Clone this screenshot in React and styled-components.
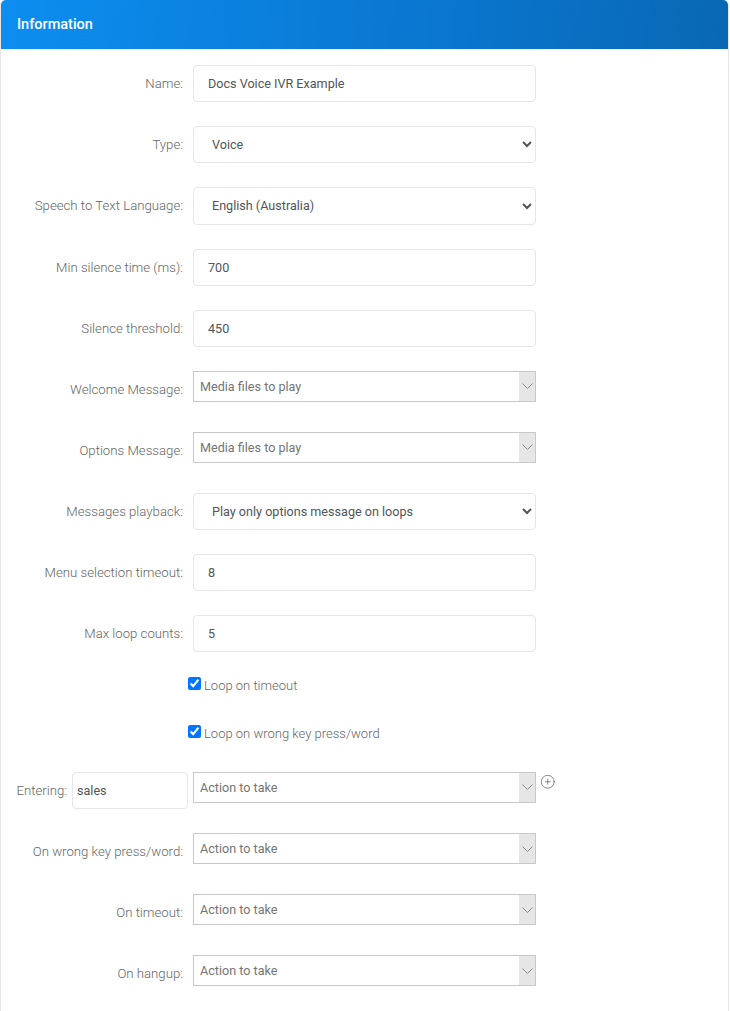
import styled, { createGlobalStyle } from "styled-components";
import { CirclePlus } from "lucide-react";

const GlobalStyle = createGlobalStyle`
  html, body {
    margin: 0;
    padding: 0;
    background: #fff;
    overflow: hidden;
  }
  body {
    font-family: Roboto, "Liberation Sans", sans-serif;
    font-size: 13px;
    color: #495057;
  }
`;

const Card = styled.div`
  width: 729px;
  height: 1011px;
  box-sizing: border-box;
  border: 1px solid #e6e6e6;
  border-top: none;
  border-bottom: none;
  border-radius: 5px 5px 0 0;
  background: #fff;
`;

const Header = styled.div`
  height: 49px;
  box-sizing: border-box;
  padding: 0 16px 1px;
  display: flex;
  align-items: center;
  background: linear-gradient(95deg, #0c8ef0 0%, #0a78d2 55%, #0968b4 100%);
  border-radius: 5px 5px 0 0;
  color: #fff;
  font-size: 14.5px;
  font-weight: 500;
`;

const Form = styled.div`
  display: flex;
  flex-direction: column;
  padding-top: 16.25px;
`;

const Row = styled.div`
  display: flex;
  align-items: flex-start;
  height: 37.1px;
  margin-bottom: 24px;
`;

const Label = styled.label`
  width: 182px;
  height: 37.1px;
  margin-right: 10px;
  display: flex;
  align-items: center;
  justify-content: flex-end;
  color: #666;
  font-size: 13.2px;
  font-weight: 300;
  white-space: nowrap;
`;

const TextInput = styled.input`
  width: ${(p) => p.$width || 343}px;
  height: 37.1px;
  box-sizing: border-box;
  padding: 0 ${(p) => p.$pad || 14}px;
  border: 1px solid #e4e6e8;
  border-radius: 4px;
  background: #fff;
  color: #50565c;
  font: 12.6px Roboto, sans-serif;
  outline: none;
`;

const NativeSelect = styled.select`
  width: 343px;
  height: 37.1px;
  box-sizing: border-box;
  padding: 0 10px 0 14px;
  border: 1px solid #e4e6e8;
  border-radius: 4px;
  background: #fff;
  color: #50565c;
  font: 12.6px Roboto, sans-serif;
  outline: none;
`;

const Multi = styled.div`
  width: 343px;
  height: 31px;
  box-sizing: border-box;
  display: flex;
  align-items: center;
  justify-content: space-between;
  border: 1px solid #c8c8c8;
  background: #fff;
  color: #757575;
  font-size: 12.6px;
`;

const MultiText = styled.span`
  padding-left: 6px;
`;

const MultiArrow = styled.span`
  width: 16px;
  height: 100%;
  display: flex;
  align-items: center;
  justify-content: center;
  background: #e6e6e6;
`;

const CheckRow = styled.label`
  display: flex;
  align-items: flex-start;
  height: 23.9px;
  margin-bottom: 24px;
  padding-left: 187px;
  line-height: 19px;
  color: #666;
  font-weight: 300;
`;

const Check = styled.input`
  width: 13px;
  height: 13px;
  margin: 1px 3px 0 0;
`;

const EnterCell = styled.div`
  width: 187px;
  margin-right: 5px;
  display: flex;
  align-items: center;
  justify-content: flex-end;
  gap: 5px;
  color: #666;
  font-size: 13.2px;
  font-weight: 300;
`;

const AddIcon = styled(CirclePlus)`
  margin: 2px 0 0 4px;
  color: #666;
`;

function Chevron() {
  return (
    <svg width="11" height="6" viewBox="0 0 11 6" fill="none">
      <path d="M0.5 0.5 L5.5 5.5 L10.5 0.5" stroke="#8a8a8a" strokeWidth="1" />
    </svg>
  );
}

function MultiSelect({ text }) {
  return (
    <Multi>
      <MultiText>{text}</MultiText>
      <MultiArrow>
        <Chevron />
      </MultiArrow>
    </Multi>
  );
}

function Field({ label, children }) {
  return (
    <Row>
      <Label>{label}</Label>
      {children}
    </Row>
  );
}

export default function App() {
  return (
    <>
      <GlobalStyle />
      <Card>
        <Header>Information</Header>
        <Form>
          <Field label="Name:">
            <TextInput defaultValue="Docs Voice IVR Example" />
          </Field>
          <Field label="Type:">
            <NativeSelect defaultValue="Voice">
              <option>Voice</option>
            </NativeSelect>
          </Field>
          <Field label="Speech to Text Language:">
            <NativeSelect defaultValue="English (Australia)">
              <option>English (Australia)</option>
            </NativeSelect>
          </Field>
          <Field label="Min silence time (ms):">
            <TextInput defaultValue="700" />
          </Field>
          <Field label="Silence threshold:">
            <TextInput defaultValue="450" />
          </Field>
          <Field label="Welcome Message:">
            <MultiSelect text="Media files to play" />
          </Field>
          <Field label="Options Message:">
            <MultiSelect text="Media files to play" />
          </Field>
          <Field label="Messages playback:">
            <NativeSelect defaultValue="Play only options message on loops">
              <option>Play only options message on loops</option>
            </NativeSelect>
          </Field>
          <Field label="Menu selection timeout:">
            <TextInput defaultValue="8" />
          </Field>
          <Field label="Max loop counts:">
            <TextInput defaultValue="5" />
          </Field>
          <CheckRow>
            <Check type="checkbox" defaultChecked />
            Loop on timeout
          </CheckRow>
          <CheckRow>
            <Check type="checkbox" defaultChecked />
            Loop on wrong key press/word
          </CheckRow>
          <Row>
            <EnterCell>
              Entering:
              <TextInput $width={116} $pad={4} defaultValue="sales" />
            </EnterCell>
            <MultiSelect text="Action to take" />
            <AddIcon size={15.5} strokeWidth={1.2} />
          </Row>
          <Field label="On wrong key press/word:">
            <MultiSelect text="Action to take" />
          </Field>
          <Field label="On timeout:">
            <MultiSelect text="Action to take" />
          </Field>
          <Field label="On hangup:">
            <MultiSelect text="Action to take" />
          </Field>
        </Form>
      </Card>
    </>
  );
}
